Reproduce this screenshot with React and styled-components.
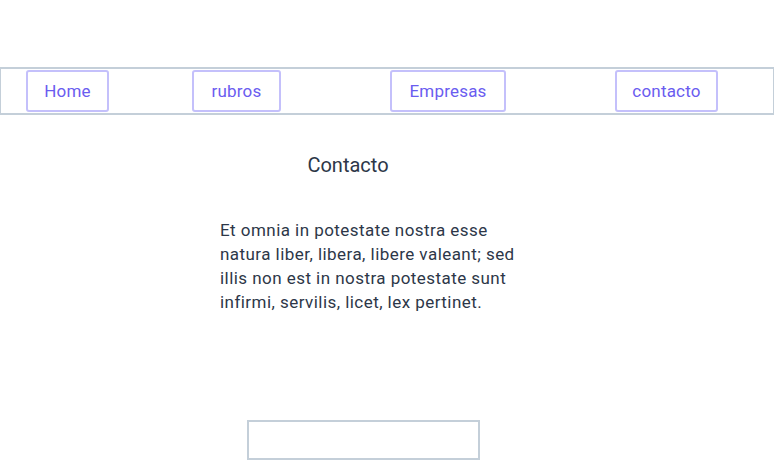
import React from 'react';
import styled, { createGlobalStyle } from 'styled-components';

const Global = createGlobalStyle`
    body {
        margin: 0;
        background: #ffffff;
        font-family: Roboto, "Liberation Sans", sans-serif;
        color: #2d3748;
    }
`;

const Page = styled.div`
    padding-top: 67px;
`;

const NavBar = styled.nav`
    display: flex;
    align-items: center;
    height: 44px;
    border: 2px solid #c4cfd9;
    border-right-width: 1px;
    border-left-width: 1px;
`;

const NavButton = styled.a`
    display: flex;
    align-items: center;
    justify-content: center;
    box-sizing: border-box;
    width: ${props => props.w}px;
    height: 42px;
    margin-left: ${props => props.gap}px;
    border: 2px solid #c4c0fb;
    border-radius: 3px;
    color: #6a5cf0;
    font-size: 17px;
    letter-spacing: 0.2px;
    text-decoration: none;
`;

const Content = styled.main`
    padding-left: 220px;
`;

const Title = styled.h2`
    width: 256px;
    margin: 38px 0 0;
    text-align: center;
    font-size: 20px;
    font-weight: 400;
    line-height: 24px;
`;

const Text = styled.p`
    width: 305px;
    margin: 41px 0 0;
    font-size: 17px;
    letter-spacing: 0.45px;
    line-height: 24px;
`;

const Box = styled.div`
    width: 233px;
    height: 40px;
    margin: 106px 0 0 27px;
    border: 2px solid #c4cfd9;
    box-sizing: border-box;
`;

const links = [
    { label: 'Home', w: 83, gap: 25 },
    { label: 'rubros', w: 89, gap: 83 },
    { label: 'Empresas', w: 116, gap: 109 },
    { label: 'contacto', w: 103, gap: 109 },
];

export default function App() {
    return (
        <Page>
            <Global />
            <NavBar>
                {links.map(l => (
                    <NavButton key={l.label} href="#" w={l.w} gap={l.gap}>{l.label}</NavButton>
                ))}
            </NavBar>
            <Content>
                <Title>Contacto</Title>
                <Text>
                    Et omnia in potestate nostra esse natura liber, libera, libere valeant; sed illis non est in nostra potestate sunt infirmi, servilis, licet, lex pertinet.
                </Text>
                <Box />
            </Content>
        </Page>
    );
}
